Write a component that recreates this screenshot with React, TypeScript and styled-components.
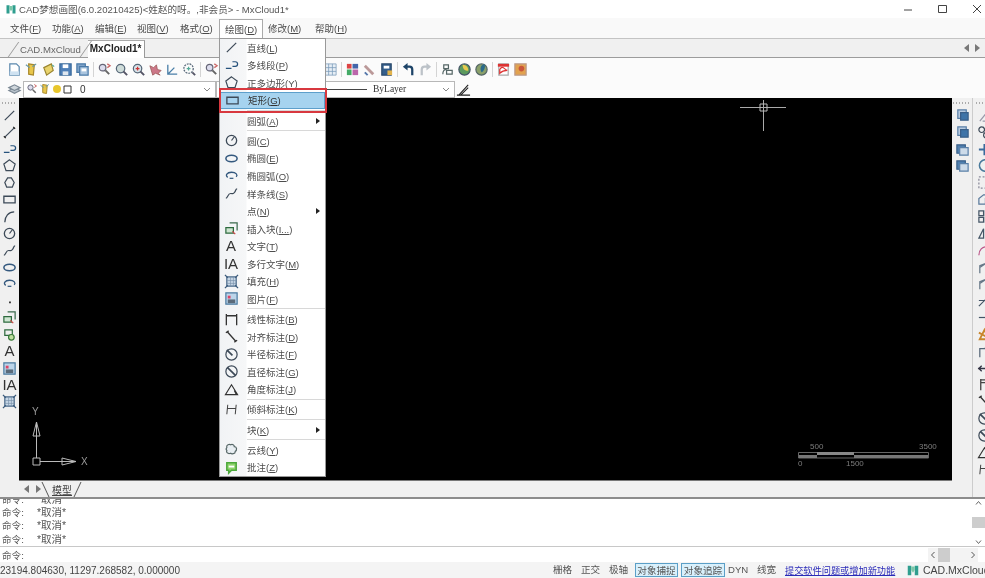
import type { ReactNode } from 'react';
import styled, { createGlobalStyle } from 'styled-components';

const Global = createGlobalStyle`
  html, body { margin: 0; padding: 0; background: #f0f0f0; }
  body { font-family: "Liberation Sans", "Noto Sans CJK SC", sans-serif; color: #444; }
  u { text-underline-offset: 1px; }
`;

const Page = styled.div`
  position: relative;
  width: 985px;
  height: 578px;
  overflow: hidden;
  display: flex;
  flex-direction: column;
  filter: blur(0.35px);
`;

const TitleBar = styled.div`
  height: 18px;
  flex: none;
  background: #fff;
  display: flex;
  align-items: center;
  padding-left: 5px;
  gap: 2px;
  font-size: 9.6px;
  color: #555;
`;
const TitleText = styled.span`
  flex: 1;
  white-space: nowrap;
`;
const WinButtons = styled.div`
  display: flex;
  align-items: center;
  gap: 25px;
  padding-right: 3px;
`;

const MenuBar = styled.div`
  height: 21px;
  flex: none;
  box-sizing: border-box;
  background: #f9f9f9;
  border-bottom: 1px solid #c4c4c4;
  display: flex;
  align-items: center;
  padding-left: 10px;
  font-size: 9.5px;
  color: #4a4a4a;
`;
const MenuTitle = styled.span<{ $w: number; $active?: boolean }>`
  width: ${({ $w }) => $w}px;
  height: 19px;
  line-height: 20px;
  flex: none;
  white-space: nowrap;
  ${({ $active }) =>
    $active &&
    `
    background: #fff;
    border: 1px solid #aaa;
    border-bottom: none;
    box-sizing: border-box;
    padding-left: 5px;
    margin: 1px 5px 0 -6px;
    height: 20px;
  `}
`;

const TabRow = styled.div`
  flex: none;
  background: #f0f0f0;
  border-bottom: 1px solid #9c9c9c;
  display: flex;
  align-items: flex-end;
  padding-left: 20px;
  font-size: 9.6px;
  box-sizing: border-box;
  height: 19px;
`;
const DocTab = styled.span<{ $active?: boolean }>`
  position: relative;
  height: ${({ $active }) => ($active ? 17 : 15)}px;
  line-height: 15px;
  padding: ${({ $active }) => ($active ? '0 3px 0 2px' : '0 3px 0 0')};
  margin-right: 3px;
  font-size: ${({ $active }) => ($active ? 10 : 9.6)}px;
  color: ${({ $active }) => ($active ? '#222' : '#666')};
  font-weight: ${({ $active }) => ($active ? 700 : 400)};
  background: ${({ $active }) => ($active ? '#fff' : 'transparent')};
  border-top: 1px solid ${({ $active }) => ($active ? '#aaa' : 'transparent')};
  border-right: 1px solid ${({ $active }) => ($active ? '#999' : 'transparent')};
  margin-bottom: ${({ $active }) => ($active ? -1 : 0)}px;
  &::before {
    content: '';
    position: absolute;
    left: ${({ $active }) => ($active ? -3 : -7)}px;
    bottom: 0;
    width: 1px;
    height: 100%;
    background: #999;
    transform: skewX(-35deg);
  }
`;
const TabScroll = styled.div`
  margin-left: auto;
  align-self: center;
  display: flex;
  gap: 4px;
  padding-right: 5px;
`;

const ToolRow = styled.div<{ $h: number }>`
  height: ${({ $h }) => $h}px;
  flex: none;
  background: #fbfbfb;
  display: flex;
  align-items: center;
  padding-left: 6px;
`;
const ToolCell = styled.span<{ $w?: number }>`
  width: ${({ $w }) => $w ?? 17}px;
  height: 16px;
  flex: none;
  display: flex;
  align-items: center;
  justify-content: center;
`;
const ToolSep = styled.span`
  width: 1px;
  height: 15px;
  margin: 0 2px;
  flex: none;
  background: #d4d4d4;
`;
const Combo = styled.div<{ $w: number }>`
  width: ${({ $w }) => $w}px;
  height: 17px;
  box-sizing: border-box;
  flex: none;
  background: #fff;
  border: 1px solid #b8b8b8;
  display: flex;
  align-items: center;
  gap: 1px;
  padding: 0 4px 0 2px;
  font-size: 10px;
  color: #333;
`;
const ComboText = styled.span`
  margin-left: 7px;
  flex: 1;
`;
const ByLayerLine = styled.span`
  width: 126px;
  margin-left: 22px;
  height: 1px;
  background: #444;
  flex: none;
`;
const ByLayerText = styled.span`
  font-family: "Liberation Serif", serif;
  font-size: 9.5px;
  margin-left: 5px;
  flex: 1;
`;

const Work = styled.div`
  flex: 1;
  min-height: 0;
  display: flex;
  background: #f0f0f0;
`;
const SideBar = styled.div`
  width: 19px;
  flex: none;
  display: flex;
  flex-direction: column;
  align-items: center;
  padding-top: 4px;
  box-sizing: border-box;
`;
const Grip = styled.span<{ $w: number }>`
  width: ${({ $w }) => $w}px;
  height: 2px;
  flex: none;
  margin-bottom: 3px;
  background: repeating-linear-gradient(90deg, #aaa 0 1px, transparent 1px 3px);
`;
const SideCell = styled.span`
  height: 16.85px;
  width: 16px;
  flex: none;
  display: flex;
  align-items: center;
  justify-content: center;
`;
const Center = styled.div`
  flex: 1;
  min-width: 0;
  display: flex;
  flex-direction: column;
`;
const Canvas = styled.div`
  position: relative;
  flex: 1;
  background: #000;
  overflow: hidden;
`;
const CanvasDrawing = styled.svg<{ $x: number; $y: number }>`
  position: absolute;
  left: ${({ $x }) => $x}px;
  top: ${({ $y }) => $y}px;
  overflow: visible;
`;
const ModelRow = styled.div`
  height: 16px;
  flex: none;
  border-top: 1px solid #777;
  display: flex;
  align-items: center;
  padding-left: 5px;
  gap: 5px;
  font-size: 10px;
`;
const ModelTab = styled.span`
  position: relative;
  margin-left: -3px;
  padding: 0 8px 0 9px;
  color: #444;
  text-decoration: underline;
  &::before, &::after {
    content: '';
    position: absolute;
    top: 0;
    width: 1px;
    height: 15px;
    background: #555;
  }
  &::before { left: 2px; transform: skewX(25deg); }
  &::after { right: 2px; transform: skewX(-25deg); }
`;
const RightBar = styled.div`
  width: 33px;
  flex: none;
  display: grid;
  grid-template-columns: 20px 13px;
  overflow: hidden;
`;
const RightCol = styled.div<{ $line?: boolean }>`
  display: flex;
  flex-direction: column;
  align-items: ${({ $line }) => ($line ? 'flex-start' : 'center')};
  padding: 4px 0 0 ${({ $line }) => ($line ? 3 : 0)}px;
  box-sizing: border-box;
  overflow: hidden;
  border-left: ${({ $line }) => ($line ? '1px solid #ccc' : 'none')};
`;

const Divider = styled.div`
  height: 2px;
  flex: none;
  background: #8c8c8c;
`;
const CommandArea = styled.div`
  height: 48px;
  flex: none;
  box-sizing: border-box;
  background: #fff;
  display: flex;
  overflow: hidden;
  border-bottom: 1px solid #c8c8c8;
`;
const CommandLog = styled.div`
  flex: 1;
  display: flex;
  flex-direction: column;
  justify-content: flex-end;
  padding: 0 0 0 2px;
  font-size: 9.6px;
`;
const CommandLine = styled.div`
  height: 13.3px;
  line-height: 13px;
  display: flex;
  flex: none;
  color: #555;
`;
const CommandLabel = styled.span`
  width: 35px;
  flex: none;
`;
const CommandText = styled.span`
  font-size: 10.5px;
`;
const VScroll = styled.div`
  width: 13px;
  flex: none;
  background: #fff;
  display: flex;
  flex-direction: column;
  align-items: center;
  justify-content: space-between;
  padding: 2px 0;
  box-sizing: border-box;
  color: #555;
`;
const VThumb = styled.span`
  width: 13px;
  height: 11px;
  background: #cdcdcd;
`;
const InputRow = styled.div`
  height: 15px;
  flex: none;
  background: #fff;
  display: flex;
  align-items: center;
  padding-left: 2px;
  font-size: 9.6px;
  color: #555;
`;
const HScroll = styled.div`
  margin-left: auto;
  width: 50px;
  margin-right: 7px;
  display: flex;
  align-items: center;
  justify-content: space-between;
  height: 14px;
  background: #f3f3f3;
`;
const HThumb = styled.span`
  width: 12px;
  height: 14px;
  margin-left: -18px;
  background: #cdcdcd;
`;

const StatusBar = styled.div`
  height: 16px;
  flex: none;
  background: #f4f4f4;
  display: flex;
  align-items: center;
  font-size: 9.6px;
  color: #555;
  white-space: nowrap;
  overflow: hidden;
`;
const Coords = styled.span`
  width: 553px;
  flex: none;
  font-size: 10px;
  color: #444;
`;
const StatusToggle = styled.span<{ $w: number; $on?: boolean }>`
  width: ${({ $w }) => $w}px;
  height: 14px;
  line-height: 13px;
  flex: none;
  box-sizing: border-box;
  margin-right: ${({ $on }) => ($on ? 3 : 0)}px;
  text-align: ${({ $on }) => ($on ? 'center' : 'left')};
  background: ${({ $on }) => ($on ? '#d9f0fb' : 'transparent')};
  border: ${({ $on }) => ($on ? '1px solid #5b9fc7' : 'none')};
`;
const StatusLink = styled.span`
  width: 121px;
  flex: none;
  color: #2a2ab8;
  text-decoration: underline;
  font-size: 9.2px;
`;
const StatusBrand = styled.span`
  display: flex;
  align-items: center;
  gap: 3px;
  font-size: 10.5px;
  color: #444;
`;

const DrawMenu = styled.div`
  position: absolute;
  left: 219px;
  top: 38px;
  width: 107px;
  height: 439px;
  box-sizing: border-box;
  background: linear-gradient(90deg, #f1f3f5 0, #f6f7f8 26px, #fff 27px);
  border: 1px solid #999;
  font-size: 9.5px;
  color: #4d4d4d;
`;
const MenuItem = styled.div<{ $hot?: boolean }>`
  height: 17.55px;
  display: flex;
  align-items: center;
  position: relative;
  box-sizing: border-box;
  ${({ $hot }) => $hot && 'background: #a6d3ef; border: 1px solid #5d9fcb; color: #333;'}
`;
const MenuIcon = styled.span`
  width: 22px;
  margin-right: 5px;
  flex: none;
  display: flex;
  align-items: center;
  justify-content: center;
`;
const MenuArrow = styled.span`
  position: absolute;
  right: 5px;
  top: 6px;
  border-left: 4px solid #222;
  border-top: 3px solid transparent;
  border-bottom: 3px solid transparent;
`;
const MenuSep = styled.div`
  height: 2.7px;
  margin-left: 27px;
  display: flex;
  align-items: center;
  &::after {
    content: '';
    flex: 1;
    height: 1px;
    background: #d8d8d8;
  }
`;
const RedMark = styled.div`
  position: absolute;
  left: 219px;
  top: 88px;
  width: 108px;
  height: 25px;
  box-sizing: border-box;
  border: 2px solid #d8383f;
`;
const Glyph = styled.span<{ $size: number }>`
  font-size: ${({ $size }) => $size}px;
  line-height: 16px;
  color: #333;
  font-weight: 500;
`;

const Ico = styled.svg`
  display: block;
  fill: none;
  stroke: #3d4a58;
  stroke-width: 1.3;
  overflow: visible;
`;

const shapes: Record<string, ReactNode> = {
  line: <path d="M3 13L13 3" />,
  xline: <><path d="M3 13L13 3" /><path d="M2 12l2 2M12 2l2 2" stroke="#222" /></>,
  pline: <path d="M2 11h6M9 4h3a2.500 2.500 0 0 1 0 5H9" stroke="#26527c" />,
  pent: <path d="M8 2l6 4.500-2.300 7H4.300L2 6.500z" />,
  hex: <path d="M6 3h4l3 5-2 5H5L3 8z" />,
  rect: <path d="M2 4.500h12v7H2z" strokeWidth="1.4" />,
  arc: <path d="M3 14C3 8 7 3 13 3" strokeWidth="1.4" />,
  circle: <><circle cx="8" cy="8" r="5.500" strokeWidth="1.4" /><path d="M8 8l3-4" /></>,
  spline: <path d="M2 13c2 0 2-5 5-5s2 1 4-1 1-4 3-4" strokeWidth="1.3" />,
  ellipse: <ellipse cx="8" cy="8" rx="6" ry="3.500" strokeWidth="1.6" stroke="#33587e" />,
  earc: <><path d="M4 10C1 8 3 4.500 8 4.500s7 3 5 5" strokeWidth="1.4" stroke="#33587e" /><path d="M6 11h4" stroke="#33587e" /></>,
  point: <path d="M7.500 9h2v2h-2z" fill="#333" stroke="none" />,
  insert: <><path d="M6 2h8v8" stroke="#3a6a4c" /><path d="M2 7h8v6H2z" fill="#cfe6d2" stroke="#2d6a3e" /><path d="M9 11l3 3" stroke="#c44" /></>,
  block: <><path d="M3 3h8v6H3z" stroke="#2d6a3e" /><circle cx="10" cy="11" r="3" fill="#bfe0a0" stroke="#3a7a3a" /></>,
  hatch: <><path d="M3 3h10v10H3z" fill="#c7d7e6" stroke="#4a6a8a" /><path d="M3 7h10M3 10h10M7 3v10M10 3v10" stroke="#7790aa" strokeWidth=".7" /><path d="M1 1l3 3M15 1l-3 3M1 15l3-3M15 15l-3-3" stroke="#3a5a7a" /></>,
  image: <><path d="M2 2h12v12H2z" fill="#bcd5ea" stroke="#4a7aa0" /><path d="M4 9h8v4H4z" fill="#5a6a7a" stroke="none" /><path d="M4 5h3v3H4z" fill="#d46" stroke="none" /></>,
  dimlin: <path d="M2.500 2v12M13.500 2v12M2.500 4h11" strokeWidth="1.4" stroke="#333" />,
  dimali: <path d="M2 4l3-2M11 14l3-2M3.500 3l9 10" strokeWidth="1.4" stroke="#333" />,
  dimrad: <><circle cx="8" cy="8" r="6" /><path d="M3 3l6 6" strokeWidth="1.8" /></>,
  dimdia: <><circle cx="8" cy="8" r="6" /><path d="M3.500 3.500l9 9" strokeWidth="1.8" /></>,
  dimang: <path d="M1.500 13.500h13L8 3zM11 9l2 4" strokeWidth="1.2" stroke="#333" />,
  dimobl: <path d="M4 3L3 13M13 3l-1 10M3.500 7h9" strokeWidth="1.1" stroke="#444" />,
  cloud: <path d="M3 6c-1-3 3-4 4-3 2-1 4 0 4 2 3 0 3 4 1 5 0 3-4 3-5 2-3 1-5-1-4-3-1-1-1-2 0-3z" fill="#e8eef2" stroke="#566" />,
  note: <><path d="M3 3h10v8H8l-3 3v-3H3z" fill="#8ed36c" stroke="#4aa73a" strokeWidth="1.6" /><path d="M5 6h6v2H5z" fill="#fff" stroke="none" /></>,
  doc: <><path d="M3 2h7l3 3v9H3z" fill="#fff" stroke="#5a88ad" /><path d="M3 10h10v4H3z" fill="#cfe2f1" stroke="none" /></>,
  open: <><path d="M5 2l6 1-1 11-5-1z" fill="#e8c64a" stroke="#a8892b" /><path d="M2 3l4 3M13 2l-4 3" stroke="#69a" /></>,
  tmpl: <><path d="M3 6l8-4 2 7-7 5z" fill="#e9d36c" stroke="#9a8530" /><path d="M12 3l2 2" stroke="#5a9" /></>,
  save: <><path d="M2 2h12v12H2z" fill="#4f80b8" stroke="#3a6a9c" /><path d="M5 2.500h6v4H5z" fill="#fff" stroke="none" /><path d="M5 10h6v4H5z" fill="#dfe7ef" stroke="none" /></>,
  saveas: <><path d="M2 2h9v9H2z" fill="#7fa3c9" stroke="#4a7aa8" /><path d="M5 5h9v9H5z" fill="#a9c4de" stroke="#4a7aa8" /><path d="M7 7h5v3H7z" fill="#fff" stroke="none" /></>,
  pan: <><circle cx="6" cy="6" r="3.500" stroke="#667" fill="#dde" /><path d="M9 9l4 4" stroke="#666" strokeWidth="2" /><path d="M11 2l3 2-3 2" stroke="#c66" /></>,
  zoom: <><circle cx="7" cy="7" r="4.500" fill="#cfdcd9" stroke="#567" /><path d="M10 10l4 4" stroke="#556" strokeWidth="2" /></>,
  zoomp: <><circle cx="7" cy="7" r="4.500" fill="#d8e4ea" stroke="#567" /><path d="M5 7h4M7 5v4" stroke="#c33" /><path d="M10 10l4 4" stroke="#556" strokeWidth="2" /></>,
  measure: <path d="M2 4l4 2 3-3 1 5 4 1-3 3 2 2-5-2-3 2z" fill="#c78" stroke="#955" strokeWidth=".8" />,
  ucs: <path d="M3 3v10h10M3 13l7-7" stroke="#4a7fa8" strokeWidth="1.4" />,
  zoomw: <><circle cx="7" cy="7" r="5" stroke="#567" strokeDasharray="2 1" /><path d="M5 7h4M7 5v4" stroke="#5a9" /><path d="M11 11l3 3" stroke="#556" strokeWidth="2" /></>,
  grid: <path d="M2 2h12v12H2zM2 6h12M2 10h12M6 2v12M10 2v12" stroke="#7a9ab8" strokeWidth=".8" fill="#e6eef5" />,
  layers: <><path d="M2 9l6-3 6 3-6 3z" fill="#b9c3cc" stroke="#7b8894" /><path d="M2 6l6-3 6 3-6 3z" fill="#d0d7dc" stroke="#7b8894" /></>,
  colors: <><path d="M2 2h5v5H2z" fill="#d44" stroke="none" /><path d="M8 2h6v5H8z" fill="#46a" stroke="none" /><path d="M2 8h5v6H2z" fill="#4a6" stroke="none" /><path d="M8 8h6v6H8z" fill="#b6a" stroke="none" /></>,
  brush: <><path d="M3 4l9 9" stroke="#b99" strokeWidth="3" /><path d="M3 11l3 3" stroke="#57a" strokeWidth="2" /></>,
  props: <><path d="M3 2h10v12H3z" fill="#345e8c" stroke="#2a4a6c" /><path d="M5 4h6v3H5z" fill="#fff" stroke="none" /><path d="M9 9h5v5H9z" fill="#e2b24a" stroke="none" /></>,
  undo: <><path d="M12 14V8a3 3 0 0 0-3-3H6" stroke="#1d4468" strokeWidth="2.400" /><path d="M7 1L2 5l5 4z" fill="#1d4468" stroke="none" /></>,
  redo: <><path d="M4 14V8a3 3 0 0 1 3-3h3" stroke="#bcc2c8" strokeWidth="2.400" /><path d="M9 1l5 4-5 4z" fill="#bcc2c8" stroke="none" /></>,
  find: <path d="M4 3h5v4H4zM7 9h6v4H7zM3 13c0-3 1-5 4-5" stroke="#566" />,
  globe: <><circle cx="8" cy="8" r="6" fill="#5b9a5e" stroke="#456" /><path d="M6 3c4 0 6 3 6 6-3 1-6-1-6-6z" fill="#e9c94f" stroke="none" /></>,
  globe2: <><circle cx="8" cy="8" r="6" fill="#8aa06a" stroke="#566" /><path d="M11 2c-4 1-5 5-3 9 2-1 5-5 3-9z" fill="#2a6a8a" stroke="none" /></>,
  pdf: <><path d="M3 2h10v12H3z" fill="#fff" stroke="#aaa" /><path d="M4 8c3-5 5 0 8 1-4 0-6 1-8 3z" stroke="#d33" /><path d="M2 2h12v3H2z" fill="#d33" stroke="none" /></>,
  photo: <><path d="M2 2h12v12H2z" fill="#e2a24e" stroke="#b98" /><circle cx="9" cy="7" r="3" fill="#c9563a" stroke="none" /></>,
  lineW: <path d="M1 14h14M3 14L13 3M5 14L13 6" stroke="#222" strokeWidth="1.200" />,
  sheet: <><path d="M3 2h9v9H3z" fill="#b8cbe0" stroke="#5a80a8" /><path d="M6 5h8v8H6z" fill="#3f74a8" stroke="#3a5f88" /></>,
  sheet2: <><path d="M2 3h9v9H2z" fill="#4f80b0" stroke="#3a5f88" /><path d="M5 6h9v8H5z" fill="#cddbe9" stroke="#5a80a8" /></>,
  erase: <path d="M3 14l9-11M6 14h8M9 14l3-6" stroke="#99a" />,
  copy: <><circle cx="5" cy="5" r="3" /><circle cx="10" cy="11" r="3" /></>,
  move: <path d="M8 2v12M2 8h12" stroke="#3a6a9c" strokeWidth="2.200" />,
  rot: <path d="M12 13A6 6 0 1 1 12 3M12 1v4" stroke="#4a7a9c" strokeWidth="1.800" />,
  dash: <path d="M2 2h12v12H2z" stroke="#889" strokeDasharray="2 2" />,
  offs: <path d="M2 13V7l5-4h7v3l-5 1v6z" stroke="#5a7a9c" />,
  array: <path d="M2 2h5v5H2zM9 2h5v5H9zM2 9h5v5H2zM9 9h5v5H9z" stroke="#456" />,
  mirror: <path d="M7 3L2 13h5zM10 2v12M13 3v10" stroke="#456" />,
  bend: <path d="M2 13c0-6 4-9 8-9 3 0 4 2 4 4" stroke="#b58" />,
  trim: <path d="M3 14V6l10-4M3 8l6-4" stroke="#678" />,
  ext: <path d="M2 14l7-7M11 5l3-3M2 8h7" stroke="#456" />,
  dashl: <path d="M2 8h12" stroke="#456" />,
  burst: <path d="M3 13L8 3l5 10zM2 6l11 6" stroke="#c8862e" strokeWidth="2" />,
  chamf: <path d="M3 14V5h4l7-1M3 5h11" stroke="#567" />,
  stretch: <path d="M1 8h14M5 5L2 8l3 3M11 5l3 3-3 3" stroke="#334" strokeWidth="1.400" />,
  flag: <path d="M4 14V2M4 3h10v3H4" stroke="#444" strokeWidth="1.400" />,
  logo: <><path d="M2 14V3h4v11zM10 14V3h4v11z" fill="#2f9e8f" stroke="none" /><path d="M6 8l2 3 2-3V4H6z" fill="#7cc7a8" stroke="none" /></>,
};

function Icon({ name, size = 15 }: { name: string; size?: number }) {
  return (
    <Ico viewBox="0 0 16 16" width={size} height={size}>
      {shapes[name]}
    </Ico>
  );
}

function Pict({ name }: { name: string }) {
  if (name === 'A') return <Glyph $size={15}>A</Glyph>;
  if (name === 'IA') return <Glyph $size={15}>IA</Glyph>;
  return <Icon name={name} />;
}

const Tri = ({ dir, color = '#777' }: { dir: 'l' | 'r'; color?: string }) => (
  <svg width="6" height="8" viewBox="0 0 6 8">
    <path d={dir === 'l' ? 'M5 0v8L0 4z' : 'M1 0v8l5-4z'} fill={color} />
  </svg>
);

const menuTitles: [string, string, number][] = [
  ['文件', 'F', 42], ['功能', 'A', 43], ['编辑', 'E', 42], ['视图', 'V', 43], ['格式', 'O', 45],
];

type MenuEntry = { label: string; key: string; icon?: string; sub?: boolean; hot?: boolean } | 'sep';
const drawEntries: MenuEntry[] = [
  { label: '直线', key: 'L', icon: 'line' },
  { label: '多线段', key: 'P', icon: 'pline' },
  { label: '正多边形', key: 'Y', icon: 'pent' },
  { label: '矩形', key: 'G', icon: 'rect', hot: true },
  'sep',
  { label: '圆弧', key: 'A', sub: true },
  'sep',
  { label: '圆', key: 'C', icon: 'circle' },
  { label: '椭圆', key: 'E', icon: 'ellipse' },
  { label: '椭圆弧', key: 'O', icon: 'earc' },
  { label: '样条线', key: 'S', icon: 'spline' },
  { label: '点', key: 'N', sub: true },
  { label: '插入块', key: 'I...', icon: 'insert' },
  { label: '文字', key: 'T', icon: 'A' },
  { label: '多行文字', key: 'M', icon: 'IA' },
  { label: '填充', key: 'H', icon: 'hatch' },
  { label: '图片', key: 'F', icon: 'image' },
  'sep',
  { label: '线性标注', key: 'B', icon: 'dimlin' },
  { label: '对齐标注', key: 'D', icon: 'dimali' },
  { label: '半径标注', key: 'F', icon: 'dimrad' },
  { label: '直径标注', key: 'G', icon: 'dimdia' },
  { label: '角度标注', key: 'J', icon: 'dimang' },
  'sep',
  { label: '倾斜标注', key: 'K', icon: 'dimobl' },
  'sep',
  { label: '块', key: 'K', sub: true },
  'sep',
  { label: '云线', key: 'Y', icon: 'cloud' },
  { label: '批注', key: 'Z', icon: 'note' },
];

const leftTools = ['line', 'xline', 'pline', 'pent', 'hex', 'rect', 'arc', 'circle', 'spline', 'ellipse', 'earc', 'point', 'insert', 'block', 'A', 'image', 'IA', 'hatch'];
const rightOne = ['sheet', 'sheet', 'sheet2', 'sheet2'];
const rightTwo = ['erase', 'copy', 'move', 'rot', 'dash', 'offs', 'array', 'mirror', 'bend', 'trim', 'trim', 'ext', 'dashl', 'burst', 'chamf', 'stretch', 'flag', 'dimali', 'dimrad', 'dimdia', 'dimang', 'dimobl'];

const toolGroups = [
  ['doc', 'open', 'tmpl', 'save', 'saveas'],
  ['pan', 'zoom', 'zoomp', 'measure', 'ucs', 'zoomw'],
  ['pan', 'zoom', 'zoomp', 'measure', 'ucs', 'zoomw', 'grid', 'grid'],
  ['colors', 'brush', 'props'],
  ['undo', 'redo'],
  ['find', 'globe', 'globe2'],
  ['pdf', 'photo'],
];

export default function App() {
  return (
    <Page>
      <Global />
      <TitleBar>
        <Icon name="logo" size={12} />
        <TitleText>CAD梦想画图(6.0.20210425)&lt;姓赵的呀。,非会员&gt; - MxCloud1*</TitleText>
        <WinButtons>
          <svg width="8" height="10" viewBox="0 0 8 10"><path d="M0 6h8" stroke="#444" /></svg>
          <svg width="10" height="10" viewBox="0 0 10 10"><path d="M1.500 1.500h8v7h-8z" stroke="#444" fill="none" /></svg>
          <svg width="10" height="10" viewBox="0 0 10 10"><path d="M1 1l8 8M9 1L1 9" stroke="#444" fill="none" /></svg>
        </WinButtons>
      </TitleBar>

      <MenuBar>
        {menuTitles.map(([t, k, w]) => (
          <MenuTitle key={t} $w={w}>{t}(<u>{k}</u>)</MenuTitle>
        ))}
        <MenuTitle $w={44} $active>绘图(<u>D</u>)</MenuTitle>
        <MenuTitle $w={47}>修改(<u>M</u>)</MenuTitle>
        <MenuTitle $w={40}>帮助(<u>H</u>)</MenuTitle>
      </MenuBar>

      <TabRow>
        <DocTab>CAD.MxCloud</DocTab>
        <DocTab $active>MxCloud1*</DocTab>
        <TabScroll>
          <Tri dir="l" />
          <Tri dir="r" />
        </TabScroll>
      </TabRow>

      <ToolRow $h={22}>
        {toolGroups.map((g, i) => (
          <span key={i} style={{ display: 'contents' }}>
            {i > 0 && <ToolSep />}
            {g.map((n, j) => (
              <ToolCell key={j}><Icon name={n} /></ToolCell>
            ))}
          </span>
        ))}
      </ToolRow>

      <ToolRow $h={18}>
        <ToolCell><Icon name="layers" /></ToolCell>
        <Combo $w={193}>
          <Icon name="pan" size={12} />
          <Icon name="open" size={12} />
          <svg width="10" height="10" viewBox="0 0 10 10"><circle cx="5" cy="5" r="4" fill="#e8c62c" /></svg>
          <svg width="9" height="9" viewBox="0 0 9 9"><path d="M1 1h7v7H1z" fill="#fff" stroke="#333" /></svg>
          <ComboText>0</ComboText>
          <svg width="8" height="5" viewBox="0 0 8 5"><path d="M1 1l3 3 3-3" stroke="#888" fill="none" /></svg>
        </Combo>
        <Combo $w={239}>
          <ByLayerLine />
          <ByLayerText>ByLayer</ByLayerText>
          <svg width="8" height="5" viewBox="0 0 8 5"><path d="M1 1l3 3 3-3" stroke="#888" fill="none" /></svg>
        </Combo>
        <ToolCell><Icon name="lineW" /></ToolCell>
      </ToolRow>

      <Work>
        <SideBar>
          <Grip $w={15} />
          {leftTools.map((n, i) => (
            <SideCell key={i}><Pict name={n} /></SideCell>
          ))}
        </SideBar>

        <Center>
          <Canvas>
            <CanvasDrawing $x={721} $y={2} width="46" height="32" viewBox="0 0 46 32">
              <path d="M0 7.500h46M23.500 0v31" stroke="#aaa" />
              <path d="M20 4h7v7h-7z" stroke="#bbb" fill="none" />
            </CanvasDrawing>
            <CanvasDrawing $x={8} $y={306} width="70" height="66" viewBox="0 0 70 66">
              <text x="5" y="11" fill="#999" fontSize="10" fontFamily="Liberation Sans">Y</text>
              <path d="M9.500 18v36" stroke="#bbb" />
              <path d="M9.500 18l-3.500 14h7z" stroke="#bbb" fill="none" />
              <path d="M6 54h7v7H6z" stroke="#bbb" fill="none" />
              <path d="M13 57.500h36" stroke="#bbb" />
              <path d="M49 57.500l-14-3.500v7z" stroke="#bbb" fill="none" />
              <text x="54" y="61" fill="#999" fontSize="10" fontFamily="Liberation Sans">X</text>
            </CanvasDrawing>
            <CanvasDrawing $x={779} $y={340} width="140" height="30" viewBox="0 0 140 30">
              <g fill="#7d7d7d" fontSize="8" fontFamily="Liberation Sans">
                <text x="12" y="11">500</text>
                <text x="121" y="11">3500</text>
                <text x="0" y="28">0</text>
                <text x="48" y="28">1500</text>
              </g>
              <path d="M0.500 14.500h130v5.500H0.500z" stroke="#666" fill="none" />
              <path d="M1 17h18v3H1zM56 17h74v3H56z" fill="#777" />
              <path d="M19 14h37v3H19z" fill="#888" />
            </CanvasDrawing>
          </Canvas>
          <ModelRow>
            <Tri dir="l" />
            <Tri dir="r" />
            <ModelTab>模型</ModelTab>
          </ModelRow>
        </Center>

        <RightBar>
          <RightCol>
            <Grip $w={18} />
            {rightOne.map((n, i) => (
              <SideCell key={i}><Icon name={n} /></SideCell>
            ))}
          </RightCol>
          <RightCol $line>
            <Grip $w={12} />
            {rightTwo.map((n, i) => (
              <SideCell key={i}><Icon name={n} /></SideCell>
            ))}
          </RightCol>
        </RightBar>
      </Work>

      <Divider />
      <CommandArea>
        <CommandLog>
          {[0, 1, 2, 3].map(i => (
            <CommandLine key={i}>
              <CommandLabel>命令:</CommandLabel>
              <CommandText>*取消*</CommandText>
            </CommandLine>
          ))}
        </CommandLog>
        <VScroll>
          <svg width="7" height="4" viewBox="0 0 7 4"><path d="M1 3.500l2.500-3 2.500 3" stroke="#666" fill="none" /></svg>
          <VThumb />
          <svg width="7" height="4" viewBox="0 0 7 4"><path d="M1 .5l2.500 3 2.500-3" stroke="#666" fill="none" /></svg>
        </VScroll>
      </CommandArea>
      <InputRow>
        命令:
        <HScroll>
          <svg width="6" height="8" viewBox="0 0 6 8" style={{ marginLeft: 2 }}><path d="M4.500 1l-3 3 3 3" stroke="#555" fill="none" /></svg>
          <HThumb />
          <svg width="6" height="8" viewBox="0 0 6 8" style={{ marginRight: 2 }}><path d="M1.500 1l3 3-3 3" stroke="#555" fill="none" /></svg>
        </HScroll>
      </InputRow>

      <StatusBar>
        <Coords>23194.804630, 11297.268582, 0.000000</Coords>
        <StatusToggle $w={28}>栅格</StatusToggle>
        <StatusToggle $w={28}>正交</StatusToggle>
        <StatusToggle $w={26}>极轴</StatusToggle>
        <StatusToggle $w={43} $on>对象捕捉</StatusToggle>
        <StatusToggle $w={44} $on>对象追踪</StatusToggle>
        <StatusToggle $w={29}>DYN</StatusToggle>
        <StatusToggle $w={28}>线宽</StatusToggle>
        <StatusLink>提交软件问题或增加新功能</StatusLink>
        <StatusBrand>
          <Icon name="logo" size={14} />
          CAD.MxCloud
        </StatusBrand>
      </StatusBar>

      <DrawMenu>
        {drawEntries.map((e, i) =>
          e === 'sep' ? (
            <MenuSep key={i} />
          ) : (
            <MenuItem key={i} $hot={e.hot}>
              <MenuIcon>{e.icon && <Pict name={e.icon} />}</MenuIcon>
              <span>{e.label}(<u>{e.key}</u>)</span>
              {e.sub && <MenuArrow />}
            </MenuItem>
          )
        )}
      </DrawMenu>
      <RedMark />
    </Page>
  );
}
